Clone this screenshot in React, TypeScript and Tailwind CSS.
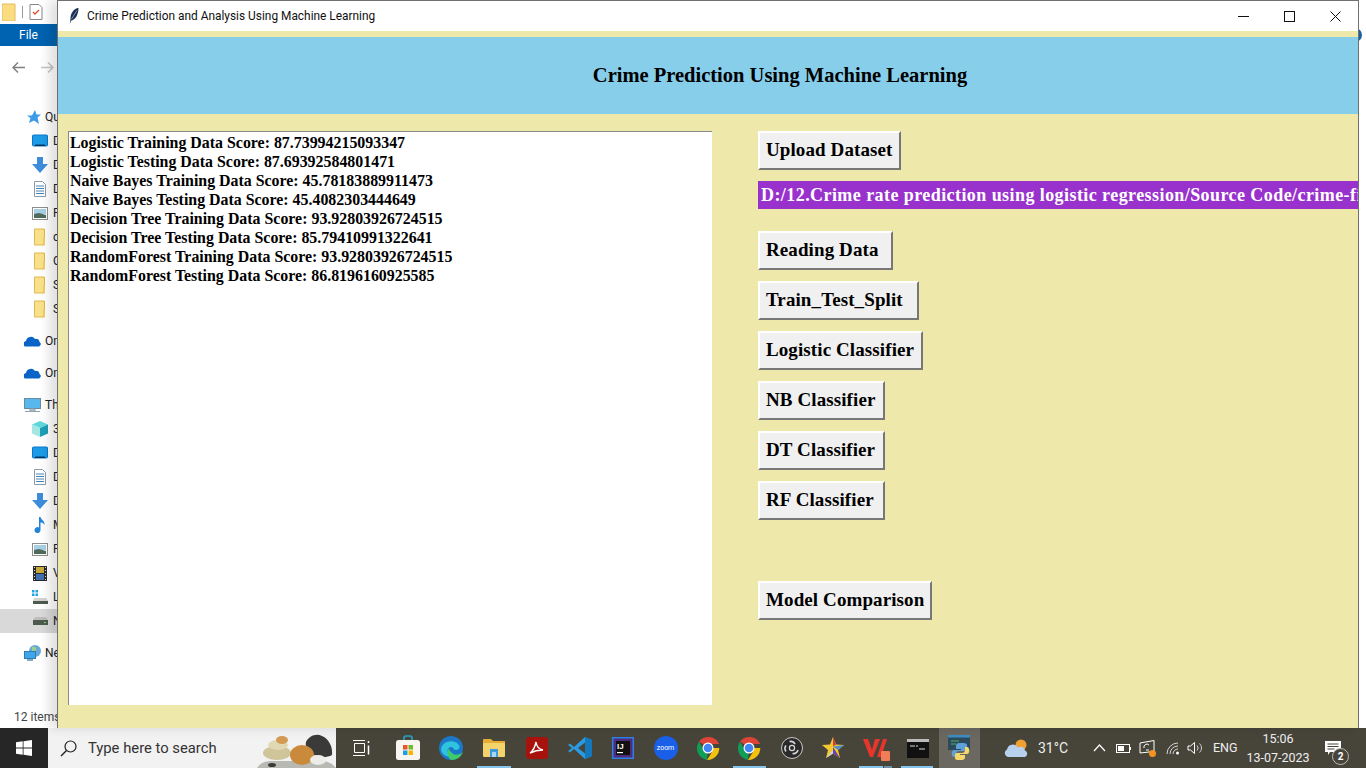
import React from "react";

const sans = "font-['Roboto','Noto_Sans',sans-serif]";
const serif = "font-['Liberation_Serif','Times_New_Roman',serif]";

const Folder = () => (
  <svg width="12" height="18" viewBox="0 0 12 18"><path d="M.5 1h10v16H.5z" fill="#fbe08a" stroke="#e0b84f" /><path d="M9 10h2v7H9z" fill="#f2cc62" /></svg>
);
const Monitor = () => (
  <svg width="16" height="14" viewBox="0 0 16 14"><rect x="0.5" y="1" width="15" height="11" rx="1" fill="#1e9be8" stroke="#0b78c8" /><rect x="3" y="10.500" width="10" height="1.500" fill="#06395f" /></svg>
);
const Down = () => (
  <svg width="16" height="16" viewBox="0 0 16 16"><path d="M5 0h6v7h5l-8 9-8-9h5z" fill="#3d8ddb" /></svg>
);
const Doc = () => (
  <svg width="12" height="16" viewBox="0 0 12 16"><path d="M.5.5h8l3 3v12H.5z" fill="#fff" stroke="#8a9aa8" /><path d="M2 5h8M2 7.500h8M2 10h8M2 12.500h8" stroke="#4c86b8" /></svg>
);
const Pic = () => (
  <svg width="16" height="13" viewBox="0 0 16 13"><rect x=".5" y=".5" width="15" height="12" fill="#fff" stroke="#8d8d8d" /><rect x="2" y="2" width="12" height="5" fill="#a8cfe6" /><path d="M2 7l5-1 7 2v3H2z" fill="#4f6b5c" /></svg>
);
const Cloud = () => (
  <svg width="17" height="11" viewBox="0 0 17 11"><path d="M1 10.500a3 3 0 0 1 1-5.600 5 5 0 0 1 9-2 3.500 3.500 0 0 1 4.500 3A2.500 2.500 0 0 1 15 10.500z" fill="#0a64c8" /></svg>
);
const Pc = () => (
  <svg width="17" height="15" viewBox="0 0 17 15"><rect x=".5" y=".5" width="16" height="10" fill="#58b8ee" stroke="#6a8a9e" /><path d="M6 11h5v2H6zM1 13.500h15" stroke="#8fa2ae" fill="#c4d4de" /></svg>
);
const Cube = () => (
  <svg width="16" height="16" viewBox="0 0 16 16"><path d="M8 0l8 3.500-8 3.500L0 3.500z" fill="#5fd8dc" /><path d="M0 3.500L8 7v9l-8-3.500z" fill="#a5e6e4" /><path d="M16 3.500L8 7v9l8-3.500z" fill="#1d9fb5" /></svg>
);
const Note = () => (
  <svg width="12" height="16" viewBox="0 0 12 16"><path d="M5 0h1.500c.5 3 4.500 3.500 4 8-1-2-2.500-2.500-4-2.500V13a3 3 0 1 1-1.500-2.500z" fill="#2384d8" /></svg>
);
const Film = () => (
  <svg width="14" height="15" viewBox="0 0 14 15"><rect width="14" height="15" fill="#2a2a2a" /><rect x="3" y="1" width="8" height="6" fill="#c6a83c" /><rect x="3" y="8" width="8" height="6" fill="#3f6fb0" /><path d="M1 1h1v1H1zM1 4h1v1H1zM1 7h1v1H1zM1 10h1v1H1zM1 13h1v1H1zM12 1h1v1h-1zM12 4h1v1h-1zM12 7h1v1h-1zM12 10h1v1h-1zM12 13h1v1h-1z" fill="#ddd" /></svg>
);
const DriveL = () => (
  <svg width="16" height="14" viewBox="0 0 16 14"><path d="M0 0h2.500v2.500H0zM3.500 0H6v2.500H3.500zM0 3.500h2.500V6H0zM3.500 3.500H6V6H3.500z" fill="#1fa2e0" /><path d="M2 8h12l2 3v3H1v-3z" fill="#d3d3d3" /><rect x="1" y="11" width="15" height="3" fill="#4f5a4f" /></svg>
);
const Drive = () => (
  <svg width="15" height="8" viewBox="0 0 15 8"><path d="M2 0h11l2 3H0z" fill="#bdbdbd" /><rect y="3" width="15" height="5" fill="#4f5a4f" /><rect x="11" y="5" width="2" height="1" fill="#6fe06f" /></svg>
);
const Net = () => (
  <svg width="18" height="16" viewBox="0 0 18 16"><circle cx="11" cy="6" r="6" fill="#6aa8d8" /><path d="M8 2c3-1 5 1 4 3s-3 1-4 3z" fill="#9ad08a" /><rect x="0.500" y="6.500" width="11" height="7" fill="#3ea6e8" stroke="#2b7cb8" /><path d="M3 15h6" stroke="#5a8eb0" strokeWidth="1.500" /></svg>
);

const rows: { icon: React.ReactNode; label: string; x: number; text: number; gap?: boolean; sel?: boolean }[] = [
  { icon: <svg width="15" height="14" viewBox="0 0 15 14"><path d="M9 0l1.500 4.500H15l-3.500 3L13 14 8 10.500 3 13l1.500-5L1 5.500h5z" fill="#3c9be8" /></svg>, label: "Quick access", x: 26, text: 45 },
  { icon: <Monitor />, label: "Desktop", x: 32, text: 53 },
  { icon: <Down />, label: "Downloads", x: 32, text: 53 },
  { icon: <Doc />, label: "Documents", x: 34, text: 53 },
  { icon: <Pic />, label: "Pictures", x: 32, text: 53 },
  { icon: <Folder />, label: "c", x: 34, text: 53 },
  { icon: <Folder />, label: "Crime", x: 34, text: 53 },
  { icon: <Folder />, label: "Source", x: 34, text: 53 },
  { icon: <Folder />, label: "Source", x: 34, text: 53 },
  { icon: <Cloud />, label: "OneDrive", x: 24, text: 45, gap: true },
  { icon: <Cloud />, label: "OneDrive", x: 24, text: 45, gap: true },
  { icon: <Pc />, label: "This PC", x: 24, text: 45, gap: true },
  { icon: <Cube />, label: "3D Objects", x: 32, text: 53 },
  { icon: <Monitor />, label: "Desktop", x: 32, text: 53 },
  { icon: <Doc />, label: "Documents", x: 34, text: 53 },
  { icon: <Down />, label: "Downloads", x: 32, text: 53 },
  { icon: <Note />, label: "Music", x: 34, text: 53 },
  { icon: <Pic />, label: "Pictures", x: 32, text: 53 },
  { icon: <Film />, label: "Videos", x: 33, text: 53 },
  { icon: <DriveL />, label: "Local Disk", x: 32, text: 53 },
  { icon: <Drive />, label: "New Volume", x: 33, text: 53, sel: true },
  { icon: <Net />, label: "Network", x: 24, text: 45, gap: true },
];

const scores = [
  "Logistic Training Data Score: 87.73994215093347",
  "Logistic Testing Data Score: 87.69392584801471",
  "Naive Bayes Training Data Score: 45.78183889911473",
  "Naive Bayes Testing Data Score: 45.4082303444649",
  "Decision Tree Training Data Score: 93.92803926724515",
  "Decision Tree Testing Data Score: 85.79410991322641",
  "RandomForest Training Data Score: 93.92803926724515",
  "RandomForest Testing Data Score: 86.8196160925585",
];

const TkButton = ({ label, w }: { label: string; w: string }) => (
  <div className={`${w} h-[39px] shrink-0 flex items-center pl-[6px] bg-[#f0f0f0] border-2 border-t-white border-l-white border-b-[#777] border-r-[#777] text-black text-[19px] tracking-[0.1px] font-bold whitespace-nowrap`}>
    {label}
  </div>
);

const Chrome = () => (
  <svg width="24" height="24" viewBox="0 0 24 24">
    <path d="M12 12L3 5.500A12 12 0 0 1 23.300 8H12z" fill="#db4437" />
    <path d="M12 12H23.300A12 12 0 0 1 11 24l5-8z" fill="#f4c20d" />
    <path d="M12 12l-1 12A12 12 0 0 1 3 5.500l5.500 10z" fill="#0f9d58" />
    <circle cx="12" cy="12" r="5.500" fill="#fff" />
    <circle cx="12" cy="12" r="4.300" fill="#4285f4" />
  </svg>
);

const Slot = ({ w, active, children, lines }: { w: string; active?: boolean; children: React.ReactNode; lines?: React.ReactNode }) => (
  <div className={`${w} h-full relative flex items-center justify-center shrink-0 ${active ? "bg-[#6a6860]" : ""}`}>
    {children}
    {lines}
  </div>
);

const Line = ({ c }: { c: string }) => <div className={`absolute bottom-0 h-[2px] bg-[#86c4ec] ${c}`} />;

export default function App() {
  return (
    <div className={`relative w-[1366px] h-[768px] overflow-hidden flex flex-col bg-white ${sans}`}>
      {/* Explorer behind */}
      <div className="flex-1 min-h-0 flex flex-col">
        <div className="h-[24px] flex items-center pl-[2px] gap-[6px] shrink-0">
          <svg width="14" height="18" viewBox="0 0 14 18"><path d="M0 1h13v17H0z" fill="#fbdc80" stroke="#e2bc58" /></svg>
          <div className="w-px h-[12px] bg-[#999]" />
          <svg width="14" height="16" viewBox="0 0 14 16"><path d="M1 .5h9l3 3v12H1z" fill="#fff" stroke="#888" /><path d="M4 8l2 2 4-4" stroke="#d9512c" strokeWidth="1.300" fill="none" /></svg>
        </div>
        <div className="h-[22px] w-[57px] bg-[#0063b1] text-white text-[12px] flex items-center pl-[19px] shrink-0">File</div>
        <div className="h-[43px] flex items-center pl-[12px] gap-[16px] shrink-0">
          <svg width="13" height="11" viewBox="0 0 13 11"><path d="M6 .5L1 5.500l5 5M1 5.500h12" stroke="#808080" strokeWidth="1.500" fill="none" /></svg>
          <svg width="13" height="11" viewBox="0 0 13 11"><path d="M7 .5l5 5-5 5M12 5.500H0" stroke="#c4c4c4" strokeWidth="1.500" fill="none" /></svg>
        </div>
        <div className="pt-[16px] flex flex-col">
          {rows.map((r, i) => (
            <div key={i} className={`h-[24px] w-[58px] flex items-center text-[12px] text-[#222] whitespace-nowrap ${r.gap ? "mt-[8px]" : ""} ${r.sel ? "bg-[#d9d9d9]" : ""}`}>
              <div className="h-full flex items-center shrink-0" style={{ marginLeft: r.x, width: r.text - r.x }}>{r.icon}</div>
              <span>{r.label}</span>
            </div>
          ))}
        </div>
        <div className="mt-auto mb-[-1px] h-[24px] pl-[14px] flex items-center text-[12px] text-[#444] whitespace-nowrap">12 items</div>
      </div>

      {/* Help button of the explorer, peeping out on the right */}
      <div className="absolute left-[1348px] top-[28px] w-[14px] h-[14px] rounded-full bg-[#1a62a8]" />

      {/* Taskbar */}
      <div className="h-[40px] shrink-0 flex bg-[#47453a] text-white">
        <div className="w-[48px] bg-[#262626] flex items-center justify-center">
          <svg width="16" height="16" viewBox="0 0 16 16"><path d="M0 2.200l6.700-.9v6.300H0zM7.500 1.200L16 0v7.600H7.500zM0 8.400h6.700v6.300L0 13.800zM7.500 8.400H16V16l-8.500-1.200z" fill="#fff" /></svg>
        </div>
        <div className="w-[288px] bg-[#f2f2f2] flex items-center relative overflow-hidden text-[#333] text-[14.800px]">
          <svg className="ml-[12px]" width="17" height="17" viewBox="0 0 17 17"><circle cx="10.500" cy="6.500" r="5.500" fill="none" stroke="#222" strokeWidth="1.200" /><path d="M6.500 10.500L1 16" stroke="#222" strokeWidth="1.400" /></svg>
          <span className="ml-[11px]">Type here to search</span>
          <svg className="absolute right-0 bottom-0" width="80" height="40" viewBox="0 0 80 40">
            <path d="M1 40c3-5 8-7 14-7h50c7 0 12 3 15 7z" fill="#b9b9b4" />
            <path d="M50 14c3-6 10-9 16-6 7 3 11 11 10 19-7 4-17 2-22-3-3-3-5-6-4-10z" fill="#3a3a38" />
            <ellipse cx="21" cy="25" rx="14" ry="7" fill="#cfc49a" />
            <ellipse cx="22" cy="17" rx="10" ry="5" fill="#e0d8b2" />
            <ellipse cx="26" cy="12" rx="6" ry="4" fill="#d29a52" />
            <ellipse cx="46" cy="27" rx="12" ry="10" fill="#c98a3c" />
            <ellipse cx="62" cy="32" rx="8" ry="5" fill="#ecece8" />
            <ellipse cx="16" cy="37" rx="4" ry="2" fill="#3a3a3a" />
          </svg>
        </div>
        <Slot w="w-[50px]">
          <svg width="17" height="16" viewBox="0 0 17 16"><path d="M0 .5h12M0 15.500h12M1.500 3.500h10v9h-10z" stroke="#fff" fill="none" /><path d="M15.500 1v2M15.500 5.500v9" stroke="#fff" strokeWidth="1.500" /></svg>
        </Slot>
        <Slot w="w-[44px]">
          <svg width="24" height="26" viewBox="0 0 24 26"><path d="M8 6V3a2 2 0 0 1 2-2h4a2 2 0 0 1 2 2v3" stroke="#2aa3c7" strokeWidth="1.600" fill="none" /><rect y="5" width="24" height="20" rx="2.500" fill="#f7f5f0" /><rect x="7" y="10" width="4.500" height="4.500" fill="#e8562a" /><rect x="12.500" y="10" width="4.500" height="4.500" fill="#76b82a" /><rect x="7" y="15.500" width="4.500" height="4.500" fill="#1e9de0" /><rect x="12.500" y="15.500" width="4.500" height="4.500" fill="#f7b500" /></svg>
        </Slot>
        <Slot w="w-[42px]">
          <svg width="24" height="24" viewBox="0 0 24 24"><circle cx="12" cy="12" r="12" fill="#1b78c8" /><path d="M2 13C3 6 12 3 18 7c4 3 3 7-1 7-3 0-2-3-5-3-4 0-5 6 0 10-6 0-10-4-10-8z" fill="#2fc3e0" /><path d="M12 24c6 0 10-3 12-8-3 3-8 4-11 1-2-2-3-3-3-5-2 3-2 9 2 12z" fill="#3ecb6c" /></svg>
        </Slot>
        <Slot w="w-[44px]" lines={<Line c="left-[5px] w-[34px]" />}>
          <svg width="22" height="20" viewBox="0 0 22 20"><path d="M0 2a1 1 0 0 1 1-1h7l2 2h12v5H0z" fill="#e8ab34" /><rect y="5" width="22" height="14" rx="1" fill="#f5d36c" /><rect x="7" y="11" width="8" height="8" fill="#3c9be0" /><rect x="9" y="14" width="4" height="5" fill="#a6d6f4" /></svg>
        </Slot>
        <Slot w="w-[42px]">
          <svg width="22" height="22" viewBox="0 0 22 22"><rect width="22" height="22" rx="3" fill="#a8120c" /><path d="M4 16c3-2 5-6 6-11 .5 4 2 7 7 8-5 0-9 1-13 3z" fill="none" stroke="#fff" strokeWidth="1.400" /></svg>
        </Slot>
        <Slot w="w-[44px]">
          <svg width="24" height="24" viewBox="0 0 24 24"><path d="M17 1l7 3v16l-7 3L6 13l-4 3.500L0 15l4-3-4-3 2-1.500L6 11z" fill="#2a9be0" /><path d="M17 1l7 3v16l-7 3z" fill="#1478be" /><path d="M17 6.500L10 12l7 5.500z" fill="#47453a" /></svg>
        </Slot>
        <Slot w="w-[41px]">
          <svg width="22" height="22" viewBox="0 0 22 22"><rect width="22" height="22" fill="#2f7fe6" /><rect x="1.500" y="1.500" width="19" height="19" fill="#4f2c78" /><rect x="4" y="4" width="14" height="14" fill="#111" /><text x="5" y="12" fontSize="8" fontWeight="700" fill="#fff" fontFamily="Liberation Sans">IJ</text><rect x="5" y="15" width="6" height="1.200" fill="#fff" /></svg>
        </Slot>
        <Slot w="w-[45px]">
          <div className="w-[24px] h-[24px] rounded-full bg-[#1a5fe8] flex items-center justify-center text-[7px] text-white leading-none">zoom</div>
        </Slot>
        <Slot w="w-[39px]"><Chrome /></Slot>
        <Slot w="w-[44px]" lines={<Line c="left-[6px] w-[33px]" />}><Chrome /></Slot>
        <Slot w="w-[41px]">
          <svg width="22" height="22" viewBox="0 0 22 22"><circle cx="11" cy="11" r="10.500" fill="#2a2a2a" stroke="#c8c8c8" /><circle cx="11" cy="11" r="2.600" fill="none" stroke="#d8d8d8" strokeWidth="1.200" /><path d="M8.500 4.500a5 5 0 0 1 5.500 2.500M17 13a5 5 0 0 1-5.500 3.500M5 14.500a5 5 0 0 1 0-6" stroke="#d8d8d8" strokeWidth="1.600" fill="none" /></svg>
        </Slot>
        <Slot w="w-[42px]">
          <svg width="22" height="22" viewBox="0 0 22 22"><path d="M11 0l3 7.500 8 .5-6 5 2 8-7-4.500-7 4.500 2-8-6-5 8-.5z" fill="#f5c831" /><path d="M11 0l3 7.500-3 2z" fill="#d33c3c" /><path d="M22 8l-6 5-5-3.500z" fill="#4c8fd0" /><path d="M18 21l-7-4.500V10z" fill="#6b3fa8" /><path d="M4 21l7-4.500V13z" fill="#c8d8e0" /></svg>
        </Slot>
        <Slot w="w-[42px]" lines={<><Line c="left-[5px] w-[24px]" /><Line c="left-[30px] w-[8px] opacity-60" /></>}>
          <div className="relative">
            <svg width="24" height="20" viewBox="0 0 24 20"><path d="M0 1h5l4 11 3-11h5l-7 18H7zM14 19l6-18h4l-6 18z" fill="#e8352c" /></svg>
            <div className="absolute -right-[3px] -bottom-[3px] w-[9px] h-[10px] bg-[#ef7d57] rounded-[1px]" />
          </div>
        </Slot>
        <Slot w="w-[43px]" lines={<Line c="left-[5px] w-[32px]" />}>
          <svg width="22" height="19" viewBox="0 0 22 19"><rect width="22" height="19" fill="#111" /><rect width="22" height="3" fill="#bbb" /><path d="M3 7h5M9 7h2M12 10h6" stroke="#ddd" /></svg>
        </Slot>
        <Slot w="w-[41px]" active>
          <svg width="24" height="26" viewBox="0 0 24 26"><rect x="0" y="0" width="22" height="15" fill="#2c4a5c" /><rect x="0" y="0" width="22" height="2.500" fill="#3d8dc0" /><path d="M3 6h8M3 9h5" stroke="#4fb06a" /><path d="M12 8c-4 0-4 2-4 4v2h5v1H6c-3 0-3 7 0 7h2v-3c0-2 1-3 3-3h5c2 0 3-1 3-3v-3c0-2-3-2-7-2z" fill="#5fa0d8" /><path d="M13 25c4 0 4-2 4-3v-2h-5v-1h7c3 0 3-7 0-7h-2v3c0 2-1 3-3 3H9c-2 0-2 1-2 3v2c0 2 2 2 6 2z" fill="#f4d86a" /></svg>
        </Slot>

        <div className="w-[58px] h-full shrink-0 flex items-center justify-end pr-[8px]">
          <svg width="26" height="20" viewBox="0 0 26 20"><circle cx="17" cy="7" r="5.500" fill="#f0a030" /><path d="M4 19a4 4 0 0 1-1-7.500 6 6 0 0 1 11-2 4.500 4.500 0 0 1 7 3 3.500 3.500 0 0 1 0 6.500z" fill="#b7d0ee" /></svg>
        </div>
        <span className="w-[55px] shrink-0 self-center text-[14px] text-[#eee]">31°C</span>
        <div className="flex items-center shrink-0">
          <svg width="13" height="8" viewBox="0 0 13 8"><path d="M1 7l5.500-6L12 7" stroke="#fff" fill="none" strokeWidth="1.200" /></svg>
          <svg className="ml-[10px]" width="15" height="9" viewBox="0 0 15 9"><rect x=".5" y=".5" width="13" height="8" fill="none" stroke="#fff" /><rect x="2" y="2" width="6" height="5" fill="#fff" /><rect x="14" y="3" width="1" height="3" fill="#fff" /></svg>
          <div className="relative ml-[8px] w-[16px] h-[16px]">
            <svg width="16" height="15" viewBox="0 0 16 15"><path d="M1 3l14-2.500v11L1 13z" fill="none" stroke="#fff" /><path d="M5 8a3 3 0 0 1 5-3M7 10h3" stroke="#fff" fill="none" /></svg>
            <div className="absolute -right-[1px] -bottom-[1px] w-[7px] h-[7px] rounded-full bg-[#f5931e]" />
          </div>
          <svg className="ml-[11px]" width="14" height="13" viewBox="0 0 14 13"><path d="M1 12a11 11 0 0 1 11-11M4 12a8 8 0 0 1 8-8M7 12a5 5 0 0 1 5-5" stroke="#d4d4d4" fill="none" /><circle cx="11.500" cy="11" r="1.500" fill="#fff" /></svg>
          <svg className="ml-[7px]" width="17" height="14" viewBox="0 0 17 14"><path d="M1 5h2.500L7.500 1.500v11L3.500 9H1z" fill="none" stroke="#fff" /><path d="M10 4.500a3.500 3.500 0 0 1 0 5M12.500 2.500a6 6 0 0 1 0 9" stroke="#d0d0d0" fill="none" /></svg>
          <span className="ml-[9px] text-[12.500px] text-[#eee] w-[29px]">ENG</span>
        </div>
        <div className="w-[72px] shrink-0 flex flex-col items-center justify-center text-[12.500px] leading-[19px] text-[#eee]">
          <span>15:06</span>
          <span>13-07-2023</span>
        </div>
        <div className="relative flex-1 flex items-center pl-[11px]">
          <svg width="16" height="15" viewBox="0 0 16 15"><path d="M0 0h16v11H5l-2 3v-3H0z" fill="#fff" /><path d="M2.500 3h11M2.500 5.500h11M2.500 8h7" stroke="#47453a" /></svg>
          <div className="absolute left-[18px] top-[20px] w-[17px] h-[17px] rounded-full border border-[#bbb] bg-[#47453a] flex items-center justify-center text-[10px] font-bold text-white">2</div>
        </div>
      </div>

      {/* Python window, floating over the explorer */}
      <div className="absolute left-[57px] top-0 w-[1302px] h-[728px] flex flex-col border-x border-t border-[#707070] bg-[#eee8aa] shadow-[-8px_0_10px_rgba(0,0,0,0.12)]">
        <div className="h-[30px] shrink-0 bg-white flex items-center text-[11.900px] text-[#111]">
          <svg className="ml-[11px]" width="10" height="16" viewBox="0 0 10 16"><path d="M9.500 0C5 .5 1.500 5 1.500 10.500L.8 16l1.400-3.500C7 11.500 9.500 6 9.500 0z" fill="#1c3158" /><path d="M8 2.500L2.500 11" stroke="#9fb6dc" strokeWidth=".7" /></svg>
          <span className="ml-[8px] pt-[1px] whitespace-nowrap">Crime Prediction and Analysis Using Machine Learning</span>
          <div className="ml-auto flex items-center h-full">
            <div className="w-[46px] h-full flex items-center justify-center">
              <svg width="11" height="11" viewBox="0 0 11 11"><path d="M0 5.500h11" stroke="#111" /></svg>
            </div>
            <div className="w-[46px] h-full flex items-center justify-center">
              <svg width="11" height="11" viewBox="0 0 11 11"><rect x=".5" y=".5" width="10" height="10" fill="none" stroke="#111" /></svg>
            </div>
            <div className="w-[46px] h-full flex items-center justify-center">
              <svg width="11" height="11" viewBox="0 0 11 11"><path d="M.5.5l10 10M10.500.5l-10 10" stroke="#111" /></svg>
            </div>
          </div>
        </div>
        <div className={`flex-1 min-h-0 flex flex-col ${serif} text-black`}>
          <div className="h-[77px] mt-[6px] shrink-0 bg-[#87ceeb] flex items-center justify-center pl-[144px] text-[20.500px] font-bold">
            Crime Prediction Using Machine Learning
          </div>
          <div className="flex pt-[17px] pl-[10px]">
            <div className="w-[644px] h-[574px] shrink-0 bg-white border-l border-t border-[#8a8a8a] pl-[1px] pt-[1px] text-[15.900px] font-bold leading-[19px]">
              {scores.map((s) => <div key={s} className="whitespace-nowrap">{s}</div>)}
            </div>
            <div className="ml-[46px] flex-1 min-w-0 flex flex-col">
              <TkButton label="Upload Dataset" w="w-[143px]" />
              <div className="mt-[11px] mb-[22px] h-[28px] bg-[#9932cc] text-white text-[18px] tracking-[0.43px] font-bold flex items-center pl-[3px] whitespace-nowrap overflow-hidden">
                D:/12.Crime rate prediction using logistic regression/Source Code/crime-final.csv
              </div>
              <div className="flex flex-col gap-[11px]">
                <TkButton label="Reading Data" w="w-[135px]" />
                <TkButton label="Train_Test_Split" w="w-[161px]" />
                <TkButton label="Logistic Classifier" w="w-[165px]" />
                <TkButton label="NB Classifier" w="w-[127px]" />
                <TkButton label="DT Classifier" w="w-[127px]" />
                <TkButton label="RF Classifier" w="w-[127px]" />
                <div className="mt-[50px]"><TkButton label="Model Comparison" w="w-[174px]" /></div>
              </div>
            </div>
          </div>
        </div>
      </div>
    </div>
  );
}
